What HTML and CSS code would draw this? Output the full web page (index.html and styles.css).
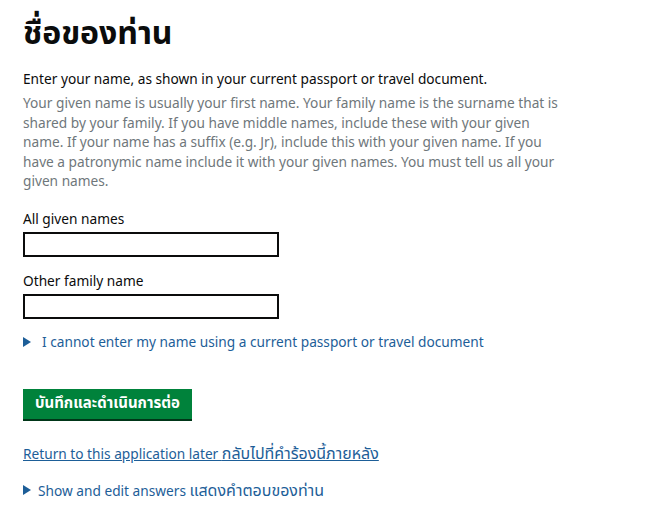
FILE: index.html
```html
<!DOCTYPE html>
<html lang="th">
<head>
<meta charset="utf-8">
<title>ชื่อของท่าน</title>
<link rel="stylesheet" href="styles.css">
</head>
<body>
<main class="page">
  <h1 class="title">ชื่อของท่าน</h1>
  <p class="lead">Enter your name, as shown in your current passport or travel document.</p>
  <p class="hint">Your given name is usually your first name. Your family name is the surname that is shared by your family. If you have middle names, include these with your given name. If your name has a suffix (e.g. Jr), include this with your given name. If you have a patronymic name include it with your given names. You must tell us all your given names.</p>
  <div class="field">
    <label class="label" for="given">All given names</label>
    <input class="input" id="given" type="text">
  </div>
  <div class="field">
    <label class="label" for="family">Other family name</label>
    <input class="input" id="family" type="text">
  </div>
  <div class="details"><span class="tri"></span><span class="details-text">I cannot enter my name using a current passport or travel document</span></div>
  <button class="button" type="button">บันทึกและดำเนินการต่อ</button>
  <p class="return"><a href="#" class="link">Return to this application later <span class="th">กลับไปที่คำร้องนี้ภายหลัง</span></a></p>
  <div class="details small"><span class="tri"></span><span class="details-text">Show and edit answers <span class="th">แสดงคำตอบของท่าน</span></span></div>
</main>
</body>
</html>
```
FILE: styles.css
```css
html, body { margin: 0; padding: 0; background: #fff; }
body {
  font-family: "Noto Sans", "Noto Sans Thai", sans-serif;
  color: #0b0c0c;
  font-size: 13.7px;
}
.page { padding: 12px 23px 0 23px; width: 560px; }
.title {
  margin: 0;
  font-size: 32px;
  line-height: 40px;
  font-weight: 700;
}
.lead { margin: 17px 0 0 0; line-height: 20px; }
.hint { margin: 4px 0 0 0; color: #6f777b; line-height: 19.6px; width: 540px; }
.field { margin-top: 18px; display: flex; flex-direction: column; align-items: flex-start; }
.field + .field { margin-top: 14px; }
.label { line-height: 20px; margin-bottom: 3px; }
.input {
  box-sizing: border-box;
  width: 256px; height: 25px;
  border: 2px solid #0b0c0c;
  margin: 0; padding: 0 4px;
  font: inherit;
}
.details { margin-top: 13px; display: flex; align-items: center; color: #1d5e98; line-height: 20px; }
.tri {
  width: 0; height: 0;
  border-left: 8px solid #1d5e98;
  border-top: 5px solid transparent;
  border-bottom: 5px solid transparent;
  margin-right: 11px;
}
.button {
  display: block;
  margin-top: 37px;
  background: #00823b;
  color: #fff;
  border: 0;
  box-shadow: 0 2px 0 #003618;
  font: inherit;
  font-size: 15px;
  font-weight: 700;
  height: 30px;
  padding: 0 12px;
}
.th { font-size: 16px; }
.return { margin: 24px 0 0 0; line-height: 20px; }
.link { color: #1d5e98; text-decoration: underline; }
.details.small { margin-top: 16px; }
.details.small .tri { margin-right: 7px; }
```
